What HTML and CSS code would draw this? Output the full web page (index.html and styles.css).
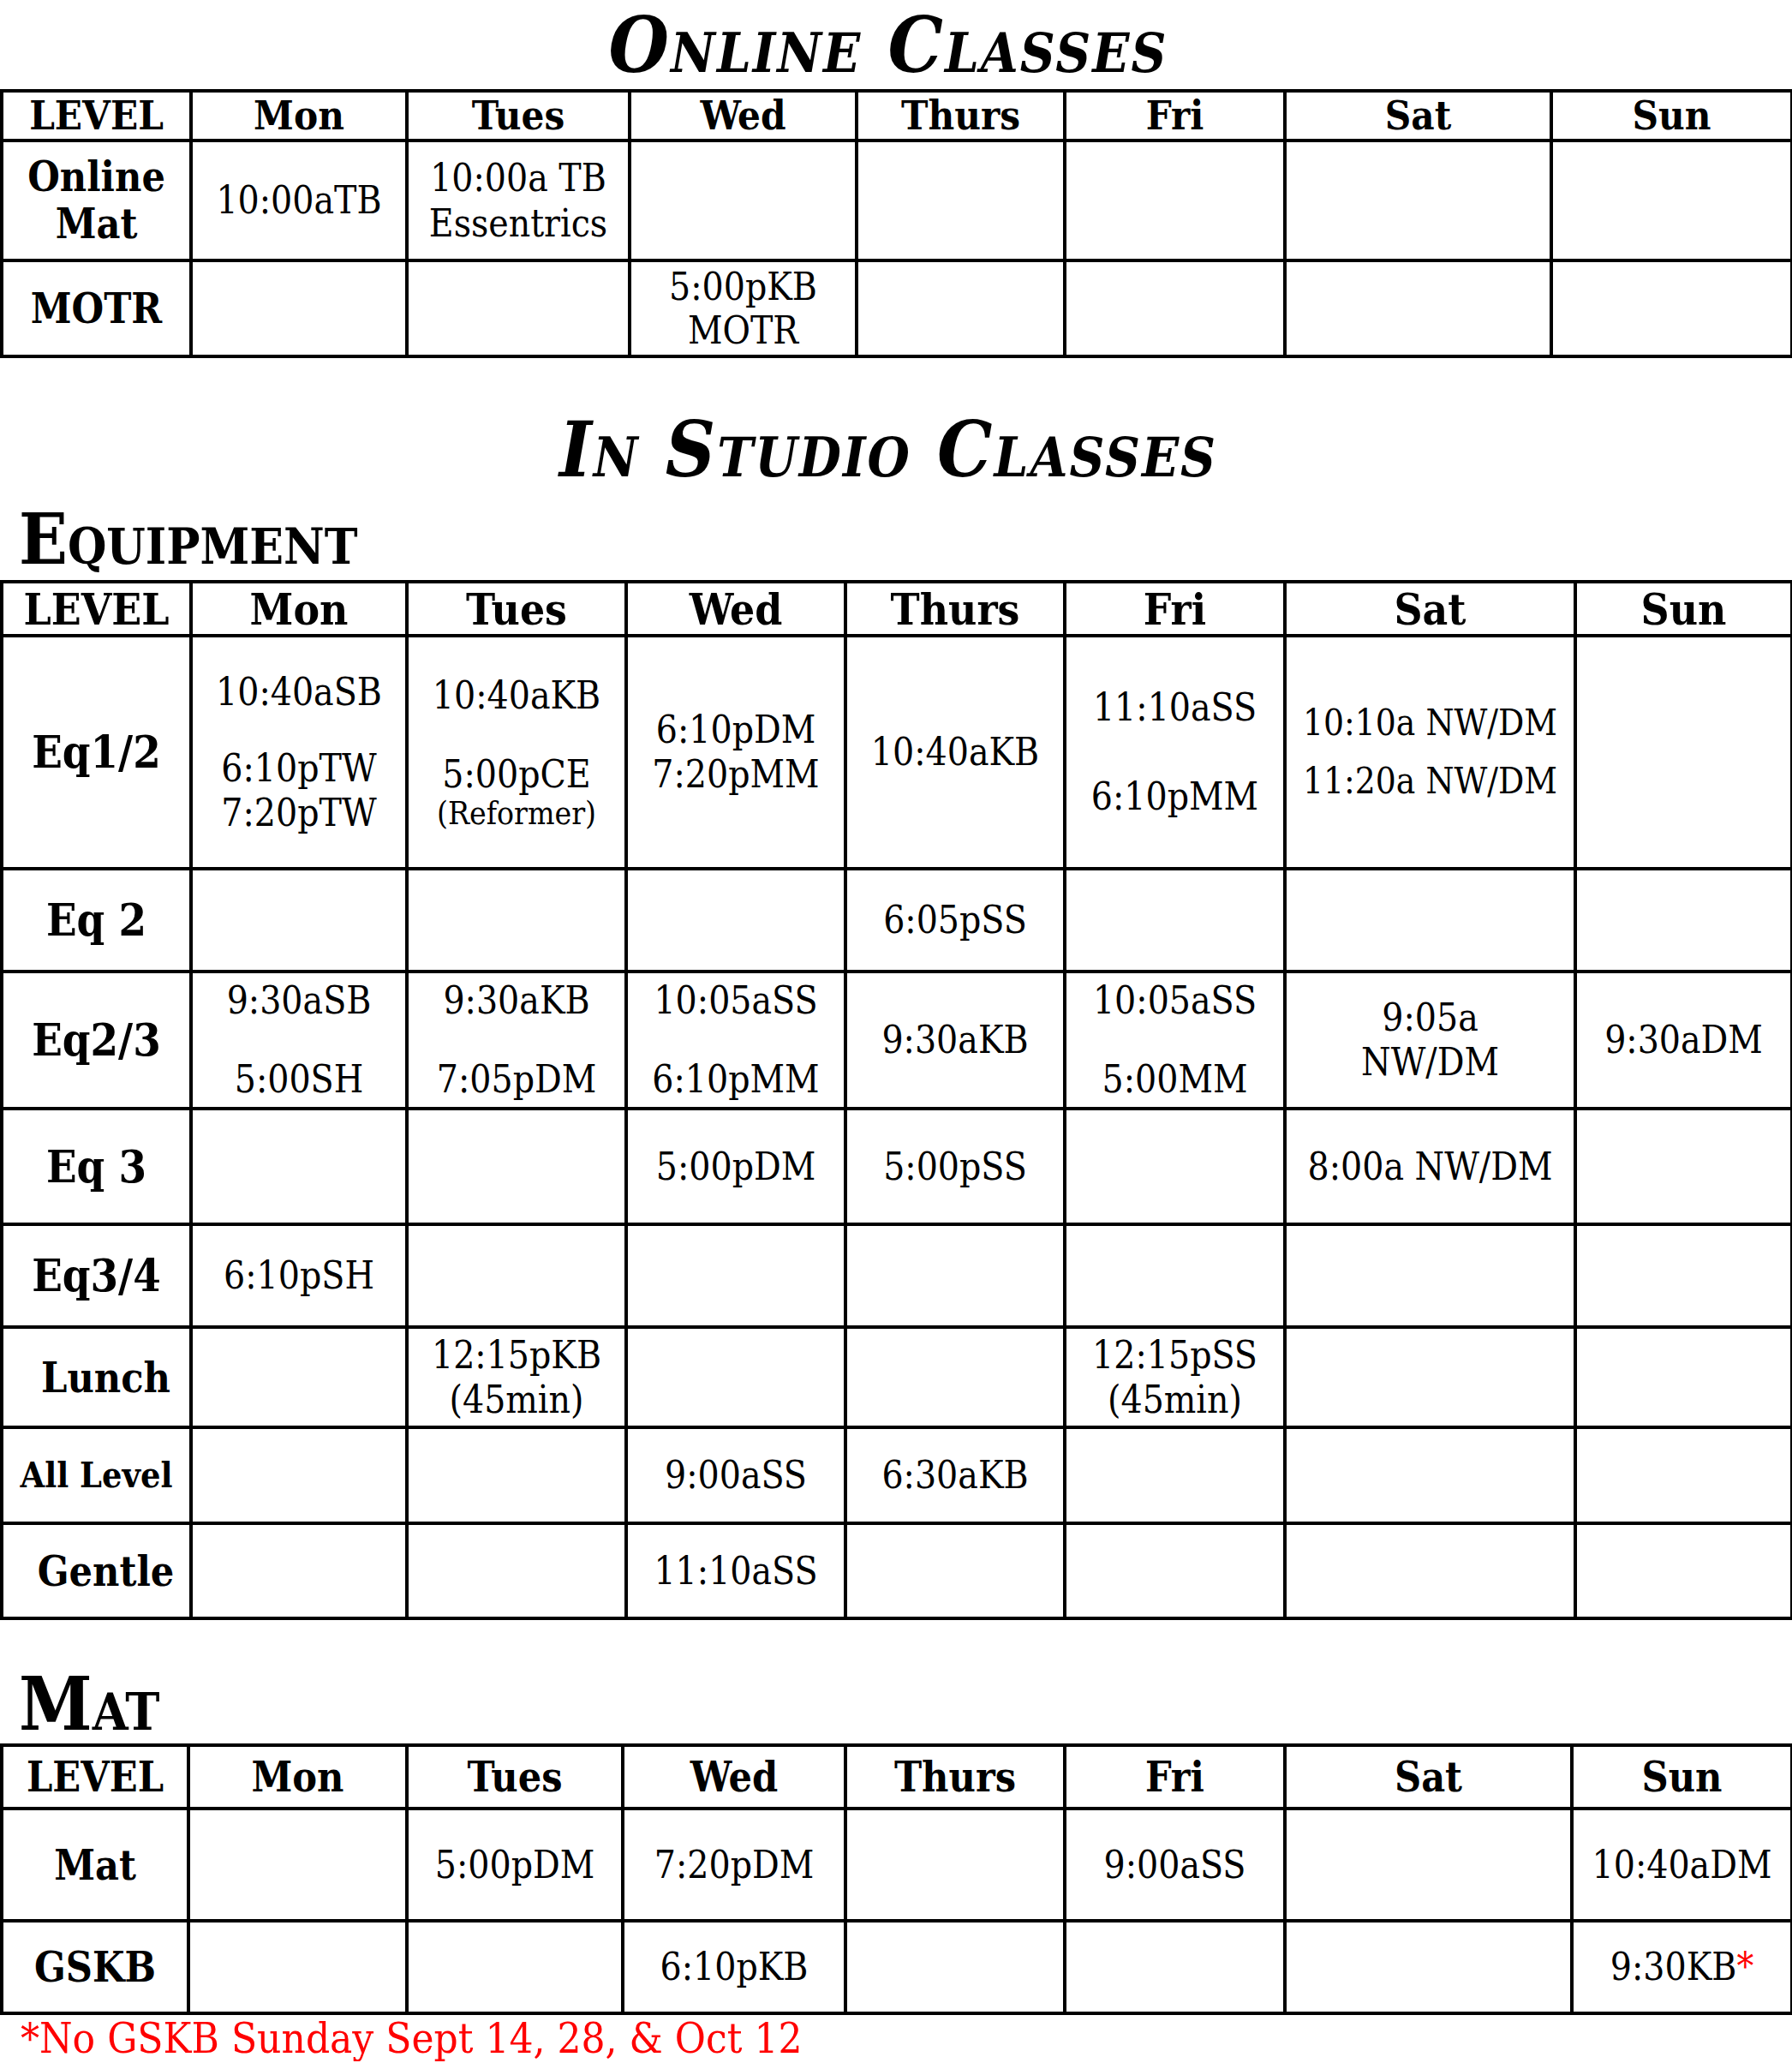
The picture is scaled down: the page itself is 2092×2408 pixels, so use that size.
FILE: index.html
```html
<!DOCTYPE html>
<html lang="en">
<head>
<meta charset="utf-8">
<title>Class Schedule</title>
<link rel="stylesheet" href="styles.css">
</head>
<body>
<h1 class="page-title">Online Classes</h1>
<table class="sched t-online">
  <colgroup>
    <col class="c221"><col class="c252"><col class="c260"><col class="c265"><col class="c243"><col class="c257"><col class="c311"><col class="c281">
  </colgroup>
  <tr class="h58">
    <th>LEVEL</th><th>Mon</th><th>Tues</th><th>Wed</th><th>Thurs</th><th>Fri</th><th>Sat</th><th>Sun</th>
  </tr>
  <tr class="h140">
    <td class="lbl lbl-tall"><div>Online</div><div>Mat</div></td>
    <td>10:00aTB</td>
    <td><div class="ln53">10:00a TB</div><div class="ln53">Essentrics</div></td>
    <td></td><td></td><td></td><td></td><td></td>
  </tr>
  <tr class="h112">
    <td class="lbl">MOTR</td>
    <td></td><td></td>
    <td><div class="ln51">5:00pKB</div><div class="ln51">MOTR</div></td>
    <td></td><td></td><td></td><td></td>
  </tr>
</table>

<h1 class="page-title studio">In Studio Classes</h1>
<h2 class="section-title">Equipment</h2>
<table class="sched t-equip">
  <colgroup>
    <col class="c221"><col class="c252"><col class="c256"><col class="c256"><col class="c256"><col class="c257"><col class="c339"><col class="c253">
  </colgroup>
  <tr class="h63">
    <th>LEVEL</th><th>Mon</th><th>Tues</th><th>Wed</th><th>Thurs</th><th>Fri</th><th>Sat</th><th>Sun</th>
  </tr>
  <tr class="h272">
    <td class="lbl-eq">Eq1/2</td>
    <td><div class="ln">10:40aSB</div><div class="gap37"></div><div class="ln">6:10pTW</div><div class="ln">7:20pTW</div></td>
    <td><div class="ln">10:40aKB</div><div class="gap40"></div><div class="ln">5:00pCE</div><div class="ln-small">(Reformer)</div></td>
    <td><div class="ln">6:10pDM</div><div class="ln">7:20pMM</div></td>
    <td>10:40aKB</td>
    <td><div class="ln">11:10aSS</div><div class="ln"></div><div class="ln">6:10pMM</div></td>
    <td class="sat-pair"><div class="ln68">10:10a NW/DM</div><div class="ln68">11:20a NW/DM</div></td>
    <td></td>
  </tr>
  <tr class="h120">
    <td class="lbl-eq">Eq 2</td>
    <td></td><td></td><td></td>
    <td>6:05pSS</td>
    <td></td><td></td><td></td>
  </tr>
  <tr class="h160">
    <td class="lbl-eq">Eq2/3</td>
    <td><div class="ln">9:30aSB</div><div class="gap40"></div><div class="ln">5:00SH</div></td>
    <td><div class="ln">9:30aKB</div><div class="gap40"></div><div class="ln">7:05pDM</div></td>
    <td><div class="ln">10:05aSS</div><div class="gap40"></div><div class="ln">6:10pMM</div></td>
    <td>9:30aKB</td>
    <td><div class="ln">10:05aSS</div><div class="gap40"></div><div class="ln">5:00MM</div></td>
    <td><div class="ln">9:05a</div><div class="ln">NW/DM</div></td>
    <td>9:30aDM</td>
  </tr>
  <tr class="h135">
    <td class="lbl-eq">Eq 3</td>
    <td></td><td></td>
    <td>5:00pDM</td>
    <td>5:00pSS</td>
    <td></td>
    <td>8:00a NW/DM</td>
    <td></td>
  </tr>
  <tr class="h120">
    <td class="lbl-eq">Eq3/4</td>
    <td>6:10pSH</td>
    <td></td><td></td><td></td><td></td><td></td><td></td>
  </tr>
  <tr class="h117">
    <td class="lbl lbl-shift">Lunch</td>
    <td></td>
    <td><div class="ln">12:15pKB</div><div class="ln">(45min)</div></td>
    <td></td><td></td>
    <td><div class="ln">12:15pSS</div><div class="ln">(45min)</div></td>
    <td></td><td></td>
  </tr>
  <tr class="h112">
    <td class="lbl-sm">All Level</td>
    <td></td><td></td>
    <td>9:00aSS</td>
    <td>6:30aKB</td>
    <td></td><td></td><td></td>
  </tr>
  <tr class="h111">
    <td class="lbl lbl-shift">Gentle</td>
    <td></td><td></td>
    <td>11:10aSS</td>
    <td></td><td></td><td></td><td></td>
  </tr>
</table>

<h2 class="section-title mat">Mat</h2>
<table class="sched t-mat">
  <colgroup>
    <col class="c218"><col class="c255"><col class="c252"><col class="c260"><col class="c256"><col class="c257"><col class="c335"><col class="c257">
  </colgroup>
  <tr class="h74">
    <th>LEVEL</th><th>Mon</th><th>Tues</th><th>Wed</th><th>Thurs</th><th>Fri</th><th>Sat</th><th>Sun</th>
  </tr>
  <tr class="h131">
    <td class="lbl">Mat</td>
    <td></td>
    <td>5:00pDM</td>
    <td>7:20pDM</td>
    <td></td>
    <td>9:00aSS</td>
    <td></td>
    <td>10:40aDM</td>
  </tr>
  <tr class="h108">
    <td class="lbl">GSKB</td>
    <td></td><td></td>
    <td>6:10pKB</td>
    <td></td><td></td><td></td>
    <td>9:30KB<span class="red">*</span></td>
  </tr>
</table>
<p class="footnote">*No GSKB Sunday Sept 14, 28, &amp; Oct 12</p>
</body>
</html>
```

FILE: styles.css
```css
html, body {
  margin: 0;
  padding: 0;
  background: #fff;
}

body {
  width: 2092px;
  color: #000;
  font-family: "DejaVu Serif Condensed", "DejaVu Serif", serif;
  font-stretch: condensed;
}

.page-title {
  margin: 0;
  height: 104px;
  line-height: 105px;
  font-size: 90px;
  letter-spacing: 2px;
  font-weight: bold;
  font-style: italic;
  font-variant: small-caps;
  text-align: center;
  padding-right: 18px;
}

.page-title.studio {
  margin-top: 54px;
  height: 105px;
}

.section-title {
  margin: 0;
  padding: 4px 0 0 22px;
  height: 96px;
  line-height: 96px;
  font-size: 83px;
  font-weight: bold;
  font-variant: small-caps;
}

.section-title.mat {
  padding-top: 52px;
  height: 92px;
  line-height: 92px;
  font-size: 86px;
}

.sched {
  border-collapse: collapse;
  table-layout: fixed;
  width: 2090px;
}

.sched th,
.sched td {
  border: 4px solid #000;
  padding: 0;
  text-align: center;
  vertical-align: middle;
  white-space: nowrap;
  font-size: 44px;
  line-height: 52px;
  font-weight: normal;
}

.sched th {
  font-weight: bold;
}

.t-online th { font-size: 47px; }
.t-equip th { font-size: 51px; line-height: 54px; }
.t-mat th { font-size: 48px; }

.c218 { width: 218px; }
.c221 { width: 221px; }
.c243 { width: 243px; }
.c252 { width: 252px; }
.c253 { width: 253px; }
.c255 { width: 255px; }
.c256 { width: 256px; }
.c257 { width: 257px; }
.c260 { width: 260px; }
.c265 { width: 265px; }
.c281 { width: 281px; }
.c311 { width: 311px; }
.c335 { width: 335px; }
.c339 { width: 339px; }

.h58 { height: 58px; }
.h63 { height: 63px; }
.h74 { height: 74px; }
.h108 { height: 108px; }
.h111 { height: 111px; }
.h112 { height: 112px; }
.h117 { height: 117px; }
.h120 { height: 120px; }
.h131 { height: 131px; }
.h135 { height: 135px; }
.h140 { height: 140px; }
.h160 { height: 160px; }
.h272 { height: 272px; }

.sched td.lbl {
  font-weight: bold;
  font-size: 48px;
}

.sched td.lbl-tall {
  line-height: 55px;
}

.sched td.lbl-shift {
  padding-left: 22px;
}

.sched td.lbl-eq {
  font-weight: bold;
  font-size: 52px;
}

.sched td.lbl-sm {
  font-weight: bold;
  font-size: 41px;
}

.ln { height: 52px; line-height: 52px; }
.ln51 { line-height: 51px; }
.ln53 { line-height: 53px; }
.ln68 { line-height: 68px; }
.ln-small { font-size: 37px; line-height: 40px; }
.gap37 { height: 37px; }
.gap40 { height: 40px; }

.sched td.sat-pair {
  font-size: 42px;
}

.red {
  color: #ff0000;
}

.footnote {
  margin: 2px 0 0 24px;
  font-size: 49px;
  line-height: 52px;
  color: #ff0000;
  white-space: nowrap;
}
```
